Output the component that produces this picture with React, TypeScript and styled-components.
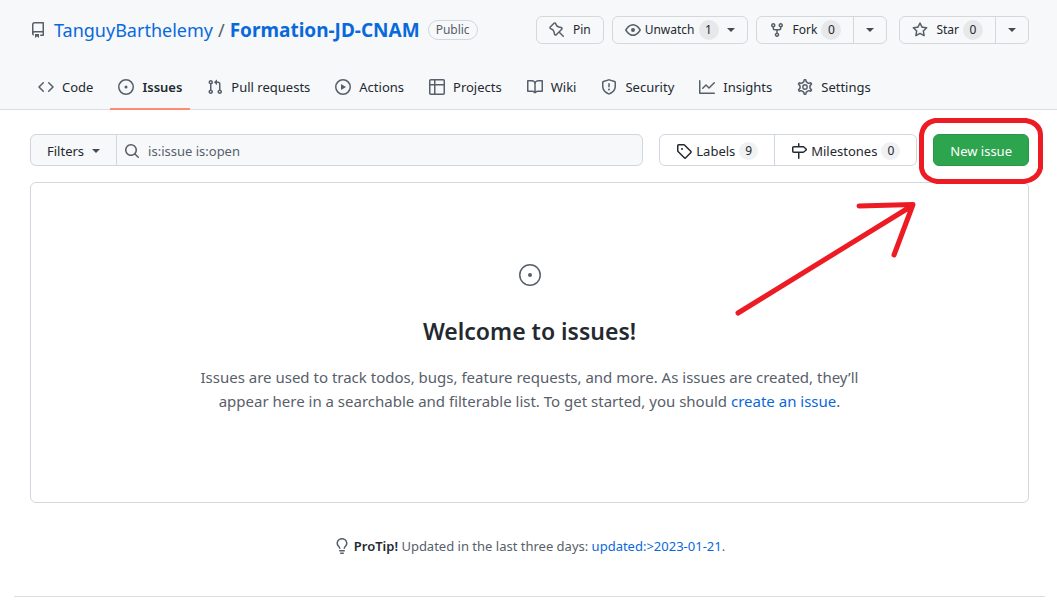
import React from "react";
import styled, { createGlobalStyle } from "styled-components";

const GlobalStyle = createGlobalStyle`
  *, *::before, *::after { box-sizing: border-box; }
  body {
    margin: 0;
    background: #ffffff;
    color: #24292f;
    font-family: "Noto Sans", "Open Sans", sans-serif;
    font-size: 13px;
    line-height: 20px;
    overflow-x: hidden;
  }
  button, input { font: inherit; color: inherit; margin: 0; }
  a { color: #0969da; text-decoration: none; }
`;

const paths = {
  repo: "M2 2.5A2.5 2.5 0 014.5 0h8.75a.75.75 0 01.75.75v12.5a.75.75 0 01-.75.75h-2.5a.75.75 0 110-1.5h1.75v-2h-8a1 1 0 00-.714 1.7.75.75 0 01-1.072 1.05A2.495 2.495 0 012 11.5v-9zm10.5-1V9h-8c-.356 0-.694.074-1 .208V2.5a1 1 0 011-1h8zM5 12.25v3.25a.25.25 0 00.4.2l1.45-1.087a.25.25 0 01.3 0L8.6 15.7a.25.25 0 00.4-.2v-3.25a.25.25 0 00-.25-.25h-3.5a.25.25 0 00-.25.25z",
  code: "M4.72 3.22a.75.75 0 011.06 1.06L2.06 8l3.72 3.72a.75.75 0 11-1.06 1.06L.47 8.53a.75.75 0 010-1.06l4.25-4.25zm6.56 0a.75.75 0 10-1.06 1.06L13.94 8l-3.72 3.72a.75.75 0 101.06 1.06l4.25-4.25a.75.75 0 000-1.06l-4.25-4.25z",
  issue: "M8 9.5a1.5 1.5 0 100-3 1.5 1.5 0 000 3zM8 0a8 8 0 100 16A8 8 0 008 0zM1.5 8a6.5 6.5 0 1113 0 6.5 6.5 0 01-13 0z",
  pull: "M7.177 3.073L9.573.677A.25.25 0 0110 .854v4.792a.25.25 0 01-.427.177L7.177 3.427a.25.25 0 010-.354zM3.75 2.5a.75.75 0 100 1.5.75.75 0 000-1.5zm-2.25.75a2.25 2.25 0 113 2.122v5.256a2.251 2.251 0 11-1.5 0V5.372A2.25 2.25 0 011.5 3.25zM11 2.5h-1V4h1a1 1 0 011 1v5.628a2.251 2.251 0 101.5 0V5A2.5 2.5 0 0011 2.5zm1 10.25a.75.75 0 111.5 0 .75.75 0 01-1.5 0zM3.75 12a.75.75 0 100 1.5.75.75 0 000-1.5z",
  play: "M1.5 8a6.5 6.5 0 1113 0 6.5 6.5 0 01-13 0zM8 0a8 8 0 100 16A8 8 0 008 0zM6.379 5.227A.25.25 0 006 5.442v5.117a.25.25 0 00.379.214l4.264-2.559a.25.25 0 000-.428L6.379 5.227z",
  table: "M1.75 0A1.75 1.75 0 000 1.75v12.5C0 15.216.784 16 1.75 16h12.5A1.75 1.75 0 0016 14.25V1.75A1.75 1.75 0 0014.25 0H1.75zM1.5 1.75a.25.25 0 01.25-.25H5V5H1.5V1.75zM6.5 1.5V5h8V1.75a.25.25 0 00-.25-.25H6.5zM14.5 6.5h-8v8h7.75a.25.25 0 00.25-.25V6.5zM5 14.5v-8H1.5v7.75c0 .138.112.25.25.25H5z",
  book: "M0 1.75A.75.75 0 01.75 1h4.253c1.227 0 2.317.59 3 1.501A3.744 3.744 0 0111.006 1h4.245a.75.75 0 01.75.75v10.5a.75.75 0 01-.75.75h-4.507a2.25 2.25 0 00-1.591.659l-.622.621a.75.75 0 01-1.06 0l-.622-.621A2.25 2.25 0 005.258 13H.75a.75.75 0 01-.75-.75V1.75zm8.755 3a2.25 2.25 0 012.25-2.25H14.5v9h-3.757c-.71 0-1.4.201-1.992.572l.004-7.322zm-1.504 7.324l.004-5.073-.002-2.253A2.25 2.25 0 005.003 2.5H1.5v9h3.757a3.75 3.75 0 011.994.574z",
  shield: "M7.467.133a1.75 1.75 0 011.066 0l5.25 1.68A1.75 1.75 0 0115 3.48V7c0 1.566-.32 3.182-1.303 4.682-.983 1.498-2.585 2.813-5.032 3.855a1.7 1.7 0 01-1.33 0c-2.447-1.042-4.049-2.357-5.032-3.855C1.32 10.182 1 8.566 1 7V3.48a1.75 1.75 0 011.217-1.667l5.25-1.68zm.61 1.429a.25.25 0 00-.153 0l-5.25 1.68a.25.25 0 00-.174.238V7c0 1.358.275 2.666 1.057 3.86.784 1.194 2.121 2.34 4.366 3.297a.2.2 0 00.154 0c2.245-.956 3.582-2.104 4.366-3.298C13.225 9.666 13.5 8.36 13.5 7V3.48a.25.25 0 00-.174-.237l-5.25-1.68zM9 10.5a1 1 0 11-2 0 1 1 0 012 0zm-.25-5.75a.75.75 0 10-1.5 0v3a.75.75 0 001.5 0v-3z",
  graph: "M1.5 1.75a.75.75 0 00-1.5 0v12.5c0 .414.336.75.75.75h14.5a.75.75 0 000-1.5H1.5V1.75zm14.28 2.53a.75.75 0 00-1.06-1.06L10 7.94 7.53 5.47a.75.75 0 00-1.06 0L3.22 8.72a.75.75 0 001.06 1.06L7 7.06l2.47 2.47a.75.75 0 001.06 0l5.25-5.25z",
  pin: "M4.456.734a1.75 1.75 0 012.826.504l.613 1.327a3.081 3.081 0 002.084 1.707l2.454.584c1.332.317 1.8 1.972.832 2.94L11.06 10l3.72 3.72a.75.75 0 11-1.061 1.06L10 11.06l-2.204 2.205c-.968.968-2.623.5-2.94-.832l-.584-2.454a3.081 3.081 0 00-1.707-2.084l-1.327-.613a1.75 1.75 0 01-.504-2.826L4.456.734zM5.92 1.866a.25.25 0 00-.404-.072L1.794 5.516a.25.25 0 00.072.404l1.328.613A4.582 4.582 0 015.73 9.63l.584 2.454a.25.25 0 00.42.12l5.47-5.47a.25.25 0 00-.12-.42L9.63 5.73a4.581 4.581 0 01-3.098-2.537L5.92 1.866z",
  eye: "M1.679 7.932c.412-.621 1.242-1.75 2.366-2.717C5.175 4.242 6.527 3.5 8 3.5c1.473 0 2.824.742 3.955 1.715 1.124.967 1.954 2.096 2.366 2.717a.119.119 0 010 .136c-.412.621-1.242 1.75-2.366 2.717C10.825 11.758 9.473 12.5 8 12.5c-1.473 0-2.824-.742-3.955-1.715C2.92 9.818 2.09 8.69 1.679 8.068a.119.119 0 010-.136zM8 2c-1.981 0-3.67.992-4.933 2.078C1.797 5.169.88 6.423.43 7.1a1.619 1.619 0 000 1.798c.45.678 1.367 1.932 2.637 3.024C4.329 13.008 6.019 14 8 14c1.981 0 3.67-.992 4.933-2.078 1.27-1.091 2.187-2.345 2.637-3.023a1.619 1.619 0 000-1.798c-.45-.678-1.367-1.932-2.637-3.023C11.671 2.992 9.981 2 8 2zm0 8a2 2 0 100-4 2 2 0 000 4z",
  fork: "M5 3.25a.75.75 0 11-1.5 0 .75.75 0 011.5 0zm0 2.122a2.25 2.25 0 10-1.5 0v.878A2.25 2.25 0 005.75 8.5h1.5v2.128a2.251 2.251 0 101.5 0V8.5h1.5a2.25 2.25 0 002.25-2.25v-.878a2.25 2.25 0 10-1.5 0v.878a.75.75 0 01-.75.75h-4.5A.75.75 0 015 6.25v-.878zm3.75 7.378a.75.75 0 11-1.5 0 .75.75 0 011.5 0zm3-8.75a.75.75 0 100-1.5.75.75 0 000 1.5z",
  star: "M8 .25a.75.75 0 01.673.418l1.882 3.815 4.21.612a.75.75 0 01.416 1.279l-3.046 2.97.719 4.192a.75.75 0 01-1.088.791L8 12.347l-3.766 1.98a.75.75 0 01-1.088-.79l.72-4.194L.818 6.374a.75.75 0 01.416-1.28l4.21-.611L7.327.668A.75.75 0 018 .25zm0 2.445L6.615 5.5a.75.75 0 01-.564.41l-3.097.45 2.24 2.184a.75.75 0 01.216.664l-.528 3.084 2.769-1.456a.75.75 0 01.698 0l2.77 1.456-.53-3.084a.75.75 0 01.216-.664l2.24-2.183-3.096-.45a.75.75 0 01-.564-.41L8 2.694v.001z",
  search: "M11.5 7a4.499 4.499 0 11-8.998 0A4.499 4.499 0 0111.5 7zm-.82 4.74a6 6 0 111.06-1.06l3.04 3.04a.75.75 0 11-1.06 1.06l-3.04-3.04z",
  tag: "M2.5 7.775V2.75a.25.25 0 01.25-.25h5.025a.25.25 0 01.177.073l6.25 6.25a.25.25 0 010 .354l-5.025 5.025a.25.25 0 01-.354 0l-6.25-6.25a.25.25 0 01-.073-.177zm-1.5 0V2.75C1 1.784 1.784 1 2.75 1h5.025c.464 0 .91.184 1.238.513l6.25 6.25a1.75 1.75 0 010 2.474l-5.026 5.026a1.75 1.75 0 01-2.474 0l-6.25-6.25A1.75 1.75 0 011 7.775zM6 5a1 1 0 100 2 1 1 0 000-2z",
  milestone: "M7.75 0a.75.75 0 01.75.75V3h3.634c.414 0 .814.147 1.13.414l2.07 1.75a1.75 1.75 0 010 2.672l-2.07 1.75a1.75 1.75 0 01-1.13.414H8.5v5.25a.75.75 0 11-1.5 0V10H2.75A1.75 1.75 0 011 8.25v-3.5C1 3.784 1.784 3 2.75 3H7V.75A.75.75 0 017.75 0zm0 8.5h4.384a.25.25 0 00.161-.06l2.07-1.75a.25.25 0 000-.38l-2.07-1.75a.25.25 0 00-.161-.06H2.75a.25.25 0 00-.25.25v3.5c0 .138.112.25.25.25h5z",
  bulb: "M8 1.5c-2.363 0-4 1.69-4 3.75 0 .984.424 1.625.984 2.304l.214.253c.223.264.47.556.673.848.284.411.537.896.621 1.49a.75.75 0 01-1.484.211c-.04-.282-.163-.547-.37-.847a8.695 8.695 0 00-.542-.68c-.084-.1-.173-.205-.268-.32C3.201 7.75 2.5 6.766 2.5 5.25 2.5 2.31 4.863 0 8 0s5.5 2.31 5.5 5.25c0 1.516-.701 2.5-1.328 3.259-.095.115-.184.22-.268.319-.207.245-.383.453-.541.681-.208.3-.33.565-.37.847a.75.75 0 01-1.485-.212c.084-.593.337-1.078.621-1.489.203-.292.45-.584.673-.848.075-.088.147-.173.213-.253.561-.679.985-1.32.985-2.304 0-2.06-1.637-3.75-4-3.75zM6 15.25a.75.75 0 01.75-.75h2.5a.75.75 0 010 1.5h-2.5a.75.75 0 01-.75-.75zM5.75 12a.75.75 0 000 1.5h4.5a.75.75 0 000-1.5h-4.5z",
};

const gearOutline =
  "M7.429 1.525a6.593 6.593 0 011.142 0c.036.003.108.036.137.146l.289 1.105c.147.56.55.967.997 1.189.174.086.341.183.501.29.417.278.97.423 1.53.27l1.102-.303c.11-.03.175.016.195.046.219.31.41.641.573.989.014.031.022.11-.059.19l-.815.806c-.411.406-.562.957-.53 1.456a4.588 4.588 0 010 .582c-.032.499.119 1.05.53 1.456l.815.806c.08.08.073.159.059.19a6.494 6.494 0 01-.573.99c-.02.029-.086.074-.195.045l-1.103-.303c-.559-.153-1.112-.008-1.529.27-.16.107-.327.204-.5.29-.449.222-.851.628-.998 1.189l-.289 1.105c-.029.11-.101.143-.137.146a6.613 6.613 0 01-1.142 0c-.036-.003-.108-.037-.137-.146l-.289-1.105c-.147-.56-.55-.967-.997-1.189a4.502 4.502 0 01-.501-.29c-.417-.278-.97-.423-1.53-.27l-1.102.303c-.11.03-.175-.016-.195-.046a6.492 6.492 0 01-.573-.989c-.014-.031-.022-.11.059-.19l.815-.806c.411-.406.562-.957.53-1.456a4.587 4.587 0 010-.582c.032-.499-.119-1.05-.53-1.456l-.815-.806c-.08-.08-.073-.159-.059-.19a6.44 6.44 0 01.573-.99c.02-.029.086-.075.195-.045l1.103.303c.559.153 1.112.008 1.529-.27.16-.107.327-.204.5-.29.449-.222.851-.628.998-1.189l.289-1.105c.029-.11.101-.143.137-.146z";

type IconName = keyof typeof paths | "gear";

const Svg = styled.svg<{ $dark?: boolean }>`
  flex: none;
  display: block;
  color: ${(p) => (p.$dark ? "#24292f" : "#57606a")};
`;

function Icon({ name, dark }: { name: IconName; dark?: boolean }) {
  return (
    <Svg width="16" height="16" viewBox="0 0 16 16" $dark={dark} aria-hidden="true">
      {name === "gear" ? (
        <g fill="none" stroke="currentColor" strokeWidth="1.4">
          <path d={gearOutline} transform="translate(8 8) scale(1.1) translate(-8 -8)" />
          <circle cx="8" cy="8" r="2.2" />
        </g>
      ) : (
        <path d={paths[name]} fill="currentColor" fillRule="evenodd" />
      )}
    </Svg>
  );
}

const Caret = styled.span`
  flex: none;
  width: 8px;
  height: 4px;
  border: 4px solid transparent;
  border-bottom: 0;
  border-top-color: #424a53;
`;

const Header = styled.header`
  background: #f6f8fa;
  border-bottom: 1px solid #d8dee4;
  padding: 16px 28px 0 30px;
`;

const TitleBar = styled.div`
  display: flex;
  align-items: flex-start;
  justify-content: space-between;
  margin-bottom: 21px;
`;

const RepoTitle = styled.h1`
  display: flex;
  align-items: center;
  margin: 0;
  font-size: 18px;
  line-height: 28px;
  font-weight: 400;
  white-space: nowrap;
`;

const RepoLinks = styled.span`
  margin: 0 8px;
`;

const Slash = styled.span`
  margin: 0 5px;
  color: #57606a;
`;

const RepoName = styled.a`
  font-size: 19px;
  font-weight: 700;
`;

const Visibility = styled.span`
  padding: 0 7px;
  border: 1px solid #d0d7de;
  border-radius: 10px;
  font-size: 12px;
  line-height: 18px;
  color: #57606a;
`;

const Actions = styled.div`
  display: flex;
  gap: 8px;
`;

const ActionGroup = styled.div<{ $spaced?: boolean }>`
  display: flex;
  height: 28px;
  margin-left: ${(p) => (p.$spaced ? 4 : 0)}px;
  border: 1px solid #d5d8db;
  border-radius: 6px;
  background: #f6f8fa;
`;

const ActionButton = styled.button<{ $tight?: boolean }>`
  display: flex;
  align-items: center;
  gap: 4px;
  padding: 0 12px;
  border: 0;
  background: none;
  font-size: 12px;
  white-space: nowrap;
  svg {
    margin-right: ${(p) => (p.$tight ? 0 : 4)}px;
  }
  ${Caret} {
    margin-left: 4px;
  }
`;

const CaretButton = styled.button`
  display: flex;
  align-items: center;
  justify-content: center;
  width: 33px;
  padding: 0;
  border: 0;
  border-left: 1px solid #d5d8db;
  background: none;
`;

const Count = styled.span<{ $light?: boolean }>`
  min-width: ${(p) => (p.$light ? 18 : 20)}px;
  border-radius: 10px;
  padding: 0 6px;
  background: ${(p) => (p.$light ? "#eff1f3" : "#e6e8ea")};
  font-size: 12px;
  line-height: ${(p) => (p.$light ? 18 : 20)}px;
  text-align: center;
`;

const Nav = styled.nav`
  display: flex;
  gap: 9px;
`;

const Tab = styled.a<{ $active?: boolean }>`
  display: flex;
  align-items: center;
  gap: 8px;
  height: 45px;
  padding: 0 8px;
  margin-bottom: -1px;
  border-bottom: 2px solid ${(p) => (p.$active ? "#fd8c73" : "transparent")};
  color: #24292f;
  font-weight: ${(p) => (p.$active ? 600 : 400)};
  white-space: nowrap;
`;

const Main = styled.main`
  padding: 24px 28px 40px 30px;
`;

const Toolbar = styled.div`
  display: flex;
  gap: 16px;
  height: 32px;
  margin-bottom: 16px;
`;

const SearchForm = styled.form`
  display: flex;
  flex: 1;
  min-width: 0;
  border: 1px solid #d0d7de;
  border-radius: 6px;
  background: #f6f8fa;
`;

const FilterButton = styled.button`
  display: flex;
  align-items: center;
  gap: 8px;
  padding: 2px 16px 0;
  border: 0;
  border-right: 1px solid #d0d7de;
  background: none;
`;

const SearchField = styled.label`
  display: flex;
  flex: 1;
  align-items: center;
  gap: 8px;
  min-width: 0;
  padding: 2px 7px 0;
`;

const SearchInput = styled.input`
  flex: 1;
  min-width: 0;
  padding: 0;
  border: 0;
  outline: 0;
  background: none;
  color: #57606a;
`;

const LinkGroup = styled.nav`
  display: flex;
  border: 1px solid #d0d7de;
  border-radius: 6px;
`;

const GroupLink = styled.a`
  display: flex;
  align-items: center;
  gap: 4px;
  padding: 2px 16px 0;
  color: #24292f;
  white-space: nowrap;
  & + & {
    border-left: 1px solid #d0d7de;
  }
`;

const NewIssueArea = styled.div`
  position: relative;
  display: flex;
`;

const NewIssueButton = styled.button`
  padding: 2px 16px 0;
  border: 1px solid #2a964a;
  border-radius: 6px;
  background: #2da44e;
  color: #ffffff;
  white-space: nowrap;
`;

const Annotation = styled.svg`
  position: absolute;
  top: -16px;
  right: -14px;
  pointer-events: none;
`;

const Blank = styled.section`
  display: flex;
  flex-direction: column;
  align-items: center;
  padding: 80px 32px 89px;
  border: 1px solid #d0d7de;
  border-radius: 6px;
  text-align: center;
`;

const BlankTitle = styled.h2`
  margin: 28px 0 18px;
  font-size: 23px;
  font-weight: 600;
  line-height: 32px;
`;

const BlankText = styled.p`
  max-width: 680px;
  margin: 0;
  font-size: 15px;
  line-height: 24px;
  color: #57606a;
`;

const ProTip = styled.p`
  display: flex;
  align-items: center;
  justify-content: center;
  gap: 4px;
  margin: 33px 0 0;
  color: #57606a;
  strong {
    color: #24292f;
    font-weight: 600;
  }
`;

const FooterRule = styled.hr`
  margin: 0 12px 0 14px;
  border: 0;
  border-top: 1px solid #d8dee4;
`;

const tabs: { label: string; icon: IconName }[] = [
  { label: "Code", icon: "code" },
  { label: "Issues", icon: "issue" },
  { label: "Pull requests", icon: "pull" },
  { label: "Actions", icon: "play" },
  { label: "Projects", icon: "table" },
  { label: "Wiki", icon: "book" },
  { label: "Security", icon: "shield" },
  { label: "Insights", icon: "graph" },
  { label: "Settings", icon: "gear" },
];

export default function App() {
  return (
    <>
      <GlobalStyle />
      <Header>
        <TitleBar>
          <RepoTitle>
            <Icon name="repo" />
            <RepoLinks>
              <a href="#owner">TanguyBarthelemy</a>
              <Slash>/</Slash>
              <RepoName href="#repo">Formation-JD-CNAM</RepoName>
            </RepoLinks>
            <Visibility>Public</Visibility>
          </RepoTitle>
          <Actions>
            <ActionGroup>
              <ActionButton>
                <Icon name="pin" />
                Pin
              </ActionButton>
            </ActionGroup>
            <ActionGroup>
              <ActionButton $tight>
                <Icon name="eye" />
                Unwatch
                <Count>1</Count>
                <Caret />
              </ActionButton>
            </ActionGroup>
            <ActionGroup>
              <ActionButton>
                <Icon name="fork" />
                Fork
                <Count>0</Count>
              </ActionButton>
              <CaretButton aria-label="Fork options">
                <Caret as="i" />
              </CaretButton>
            </ActionGroup>
            <ActionGroup $spaced>
              <ActionButton>
                <Icon name="star" />
                Star
                <Count>0</Count>
              </ActionButton>
              <CaretButton aria-label="Star options">
                <Caret as="i" />
              </CaretButton>
            </ActionGroup>
          </Actions>
        </TitleBar>
        <Nav aria-label="Repository">
          {tabs.map((tab) => (
            <Tab key={tab.label} href={"#" + tab.icon} $active={tab.label === "Issues"}>
              <Icon name={tab.icon} />
              {tab.label}
            </Tab>
          ))}
        </Nav>
      </Header>
      <Main>
        <Toolbar>
          <SearchForm>
            <FilterButton type="button">
              Filters
              <Caret />
            </FilterButton>
            <SearchField>
              <Icon name="search" />
              <SearchInput aria-label="Search all issues" defaultValue="is:issue is:open" />
            </SearchField>
          </SearchForm>
          <LinkGroup aria-label="Issue links">
            <GroupLink href="#labels">
              <Icon name="tag" dark />
              Labels
              <Count $light>9</Count>
            </GroupLink>
            <GroupLink href="#milestones">
              <Icon name="milestone" dark />
              Milestones
              <Count $light>0</Count>
            </GroupLink>
          </LinkGroup>
          <NewIssueArea>
            <NewIssueButton>New issue</NewIssueButton>
            <Annotation
              width="310"
              height="200"
              viewBox="0 0 310 200"
              fill="none"
              stroke="#ed1c24"
              strokeWidth="5"
              strokeLinecap="round"
              strokeLinejoin="round"
              aria-hidden="true"
            >
              <path d="M202 2.5H293Q307 5 307.5 17V50Q305 61 291 63.5H204Q190 61 188.5 50V17Q190 5 202 2.5Z" />
              <path d="M5 195L177 89M126 88L180 86.5L161 137" />
            </Annotation>
          </NewIssueArea>
        </Toolbar>
        <Blank>
          <Svg width="24" height="24" viewBox="0 0 24 24" aria-hidden="true">
            <circle cx="12" cy="12" r="10.25" fill="none" stroke="currentColor" strokeWidth="1.5" />
            <circle cx="12" cy="12" r="2" fill="currentColor" />
          </Svg>
          <BlankTitle>Welcome to issues!</BlankTitle>
          <BlankText>
            Issues are used to track todos, bugs, feature requests, and more. As issues are created, they’ll appear
            here in a searchable and filterable list. To get started, you should <a href="#create">create an issue</a>.
          </BlankText>
        </Blank>
        <ProTip>
          <Icon name="bulb" />
          <span>
            <strong>ProTip!</strong> Updated in the last three days: <a href="#updated">updated:&gt;2023-01-21</a>.
          </span>
        </ProTip>
      </Main>
      <FooterRule />
    </>
  );
}
